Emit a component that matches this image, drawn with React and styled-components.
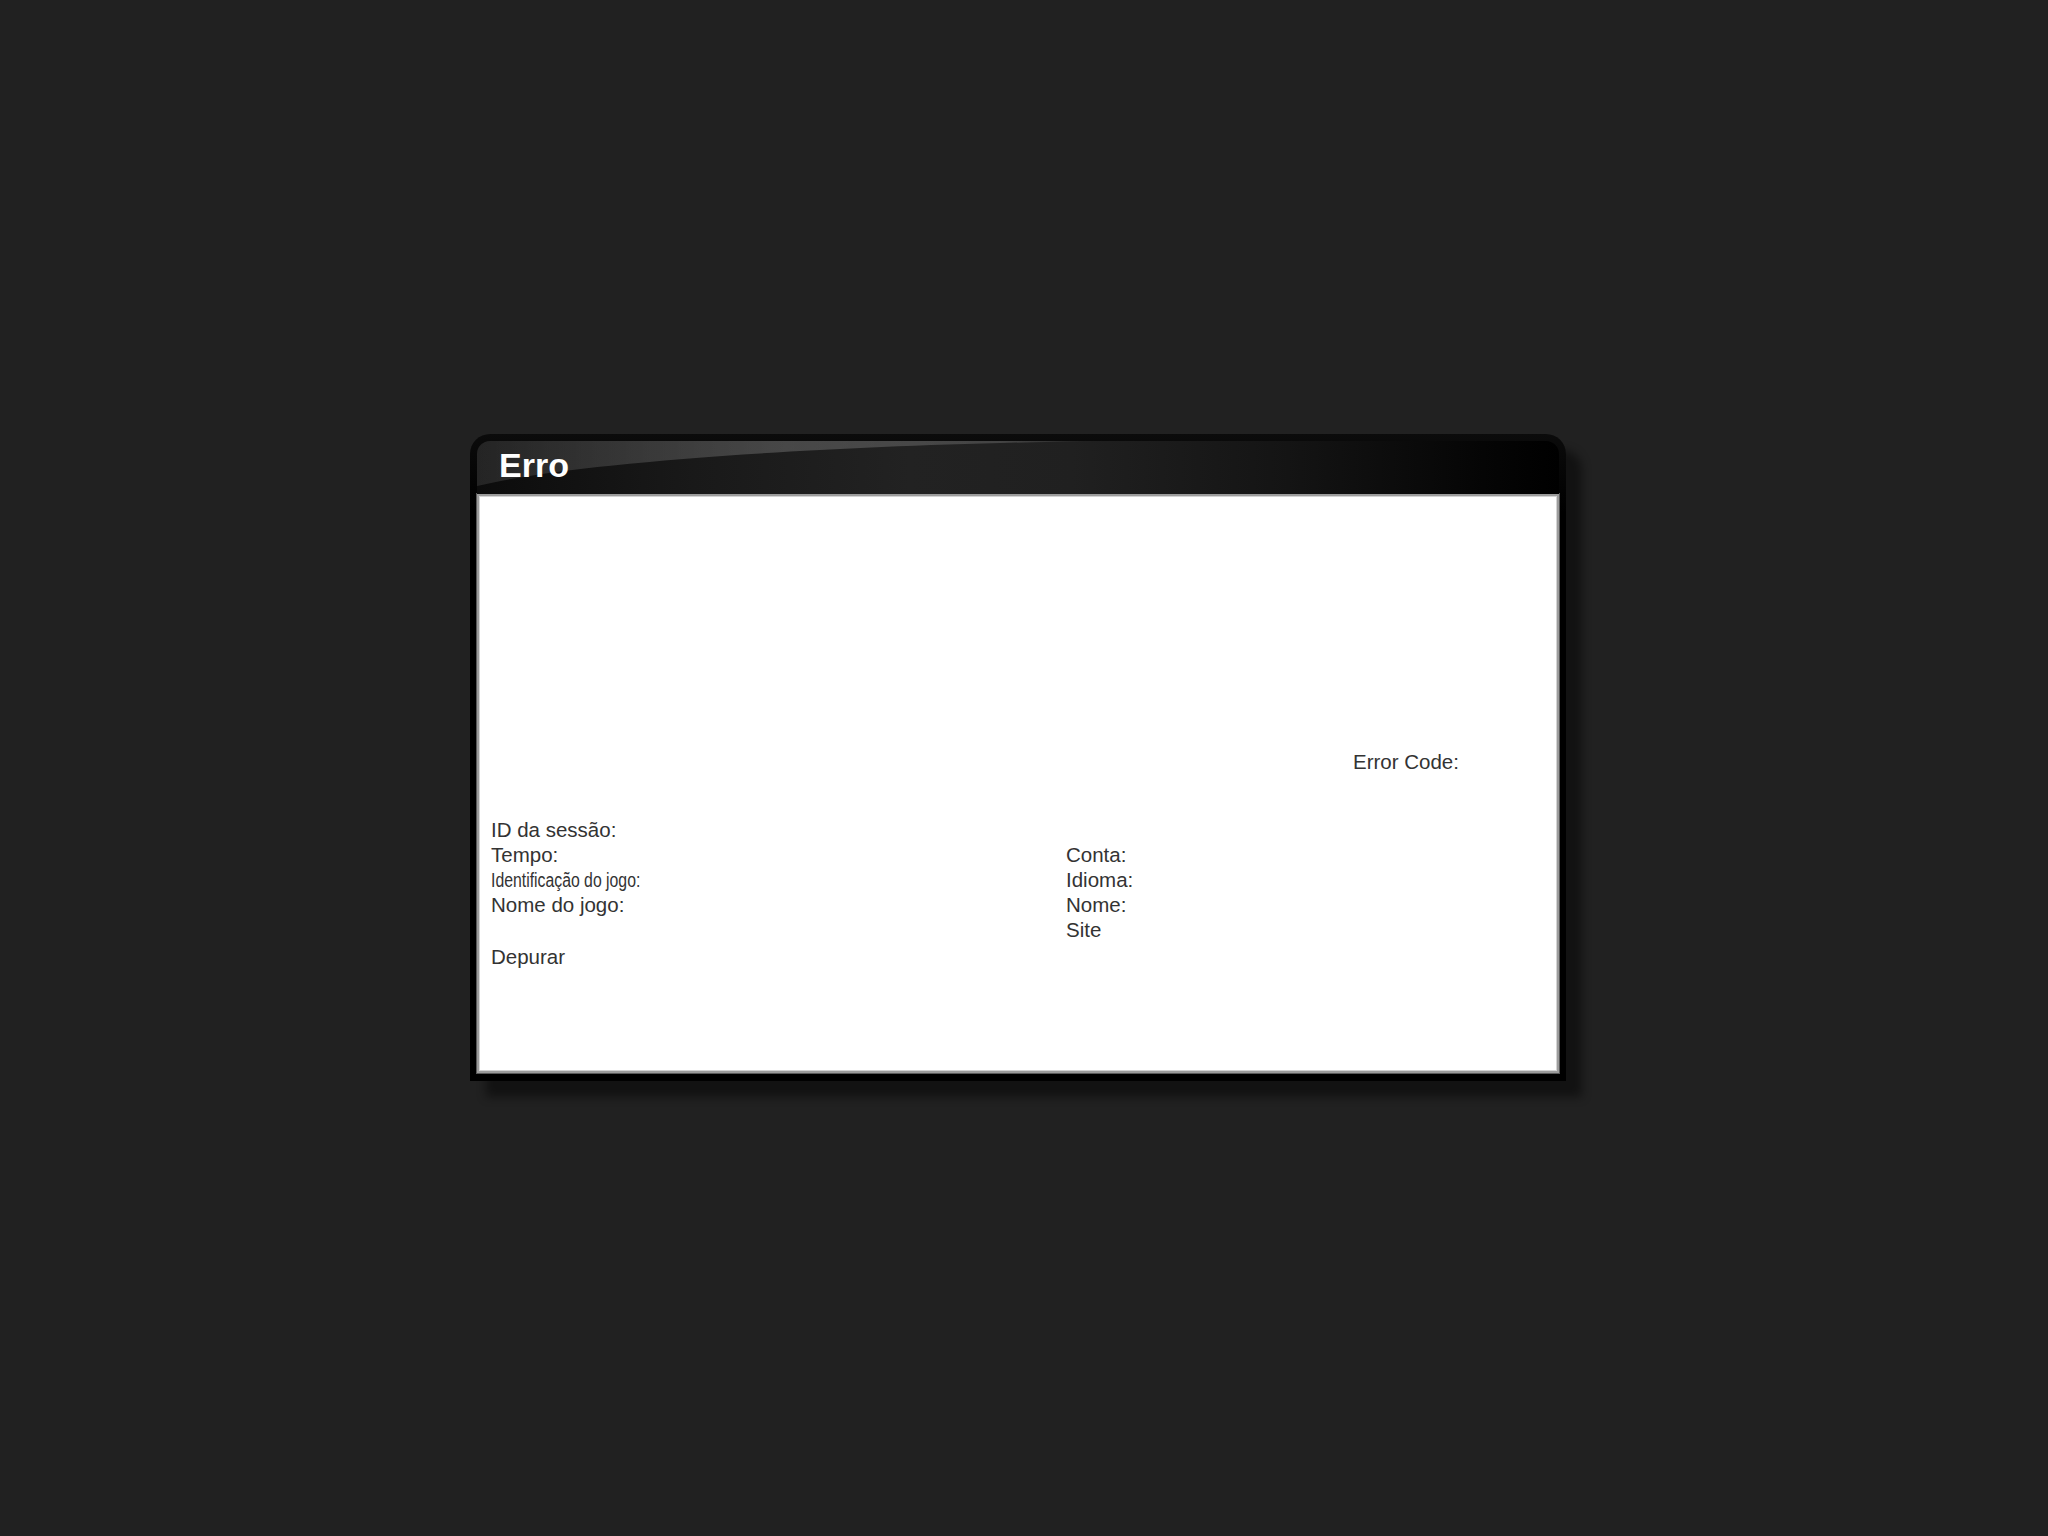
import React from "react";
import styled, { createGlobalStyle } from "styled-components";

const Global = createGlobalStyle`
  html, body { margin: 0; padding: 0; background: #212121; }
  body { font-family: "Liberation Sans", Arial, sans-serif; }
`;

const Page = styled.div`
  min-height: 1536px;
  box-sizing: border-box;
  padding: 434px 0 0 470px;
`;

const Dialog = styled.section`
  width: 1096px;
  box-sizing: border-box;
  padding: 7px 7px 8px 7px;
  background: linear-gradient(to bottom, #0b0b0b 0%, #000 12%, #000 100%);
  border-radius: 20px 20px 0 0;
  box-shadow: 16px 16px 10px rgba(0, 0, 0, 0.45);
`;

const Header = styled.header`
  position: relative;
  height: 53px;
  box-sizing: border-box;
  padding: 8px 0 0 22px;
  border-radius: 13px 13px 0 0;
  overflow: hidden;
  background: linear-gradient(
    to right,
    #0c0c0c 0%,
    #191919 20%,
    #222 40%,
    #202020 55%,
    #141414 75%,
    #050505 93%,
    #000 100%
  );
`;

const Gloss = styled.svg`
  position: absolute;
  left: 0;
  top: 0;
  width: 100%;
  height: 100%;
  pointer-events: none;
`;

const Title = styled.h1`
  position: relative;
  margin: 0;
  font-family: "Liberation Sans", Arial, sans-serif;
  font-weight: 700;
  font-size: 34px;
  line-height: 33px;
  color: #fff;
`;

const Panel = styled.div`
  height: 579px;
  box-sizing: border-box;
  background: #fff;
  border: 2px solid #9c9c9c;
  box-shadow: 0 0 0 1px #5a5a5a, inset 0 0 0 1px #d4d4d4;
  padding: 0 12px;
  color: #333;
  font-family: "Liberation Sans", Arial, sans-serif;
  font-size: 20.5px;
  line-height: 25px;
`;

const MessageArea = styled.div`
  height: 253px;
`;

const ErrorRow = styled.div`
  padding-left: 862px;
  height: 25px;
`;

const InfoGrid = styled.div`
  margin-top: 43px;
  display: grid;
  grid-template-columns: 575px 1fr;
`;

const Column = styled.div`
  display: flex;
  flex-direction: column;
  padding-top: ${(p) => (p.$offset ? "25px" : "0")};
`;

const Line = styled.div`
  height: 25px;
  white-space: nowrap;
`;

const Narrow = styled.span`
  display: inline-block;
  font-size: 20px;
  transform: scaleX(0.79);
  transform-origin: left center;
`;

const Spacer = styled.div`
  height: 25px;
`;

const DebugLink = styled.div`
  margin-top: 2px;
  height: 25px;
`;

export default function App() {
  return (
    <>
      <Global />
      <Page>
        <Dialog>
          <Header>
            <Gloss viewBox="0 0 1082 53" preserveAspectRatio="none">
              <defs>
                <linearGradient id="gl" x1="0" y1="0" x2="1" y2="0">
                  <stop offset="0" stopColor="#fff" stopOpacity="0.1" />
                  <stop offset="0.5" stopColor="#fff" stopOpacity="0.19" />
                  <stop offset="0.85" stopColor="#fff" stopOpacity="0.16" />
                  <stop offset="1" stopColor="#fff" stopOpacity="0.02" />
                </linearGradient>
              </defs>
              <path d="M0,0 L620,0 C300,5 80,25 0,45 Z" fill="url(#gl)" />
            </Gloss>
            <Title>Erro</Title>
          </Header>
          <Panel>
            <MessageArea />
            <ErrorRow>Error Code:</ErrorRow>
            <InfoGrid>
              <Column>
                <Line>ID da sessão:</Line>
                <Line>Tempo:</Line>
                <Line>
                  <Narrow>Identificação do jogo:</Narrow>
                </Line>
                <Line>Nome do jogo:</Line>
                <Spacer />
                <DebugLink>Depurar</DebugLink>
              </Column>
              <Column $offset>
                <Line>Conta:</Line>
                <Line>Idioma:</Line>
                <Line>Nome:</Line>
                <Line>Site</Line>
              </Column>
            </InfoGrid>
          </Panel>
        </Dialog>
      </Page>
    </>
  );
}
